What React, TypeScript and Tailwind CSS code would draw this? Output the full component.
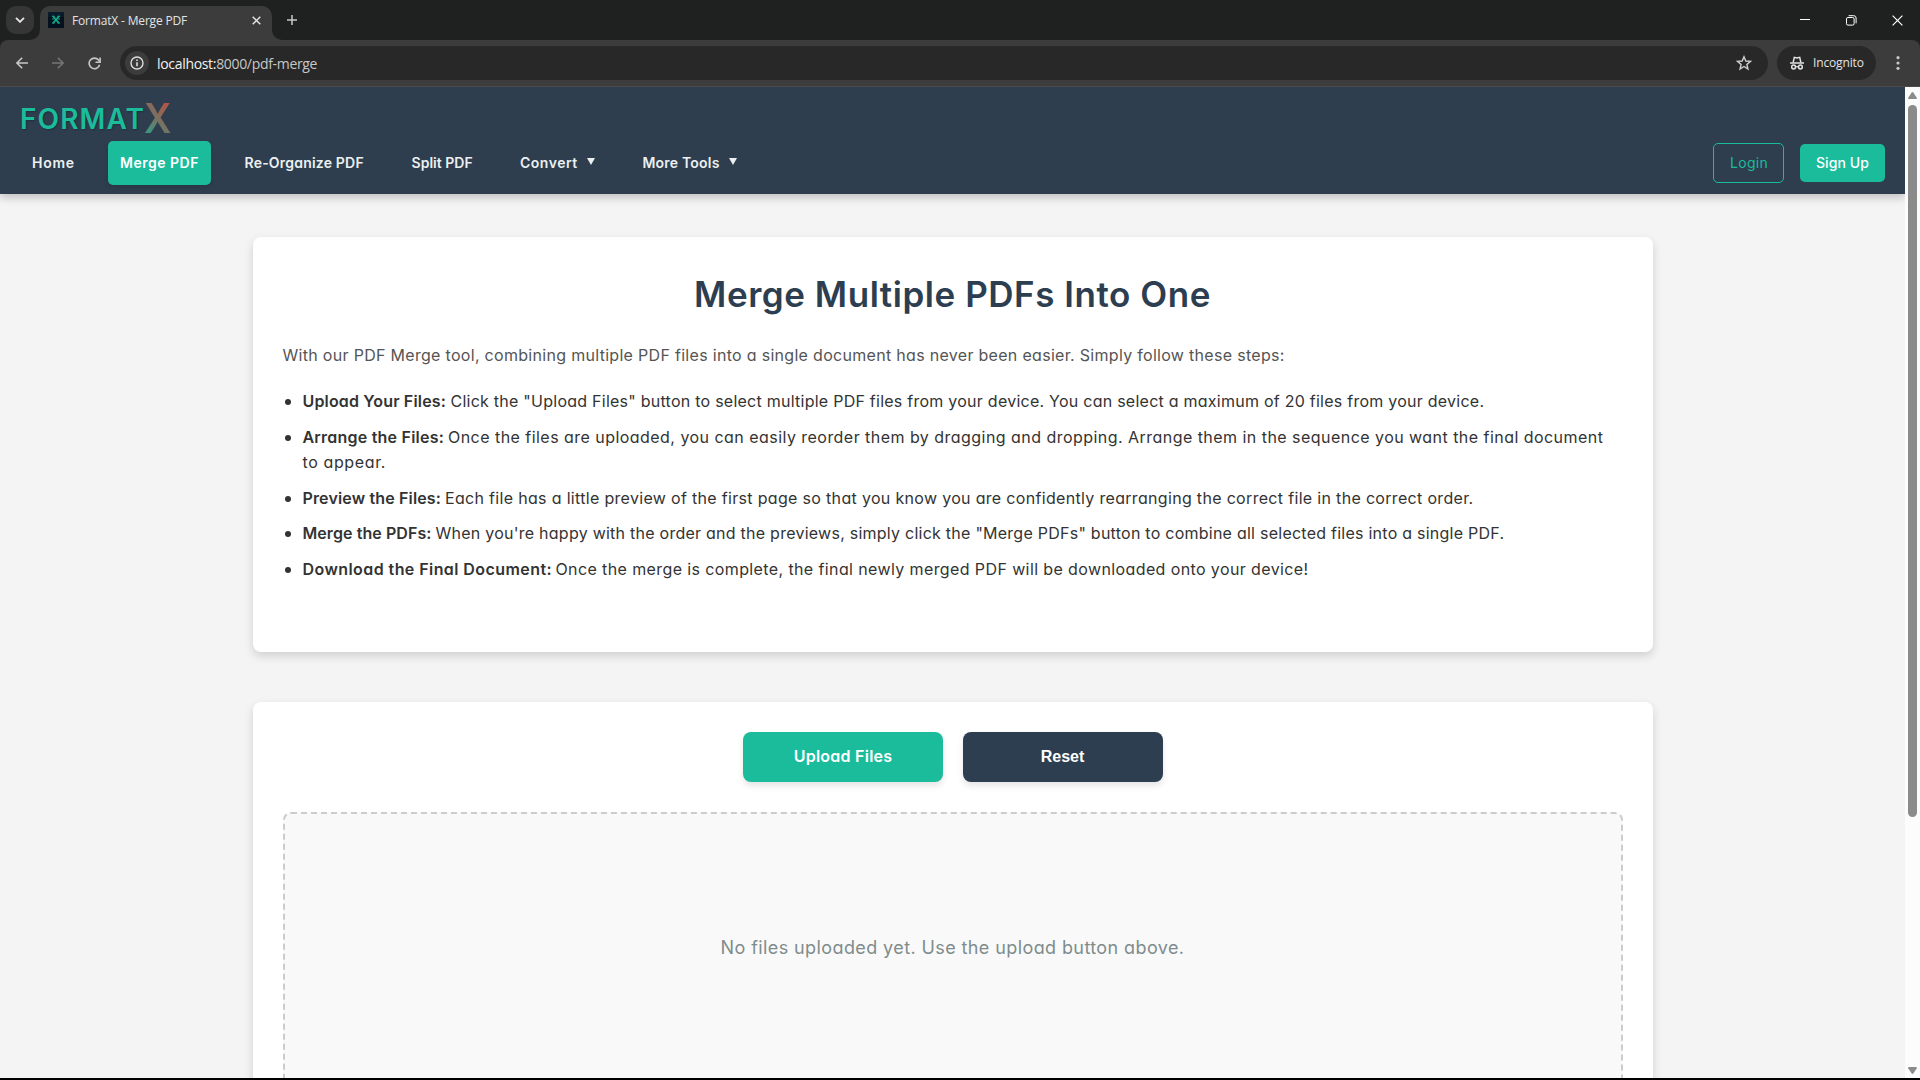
import React from "react";

const CHROME_FONT = "font-['Open_Sans','Noto_Sans',sans-serif]";

function Favicon() {
  return (
    <svg width="16" height="16" viewBox="0 0 16 16" className="shrink-0">
      <rect width="16" height="16" fill="#04111f" />
      <path d="M0 0h16v5H0z" fill="#0a1c2c" />
      <g fill="none" stroke="#12a684" strokeWidth="1.8">
        <path d="M5 4.2 11 11.4M11 4.2 5 11.4" />
        <path d="M4 4.4h2.4M9.6 4.4H12M4 7h2.4M9.6 7H12M4 11h2.4M9.6 11H12" strokeWidth="1.1" />
      </g>
    </svg>
  );
}

function TabStrip() {
  return (
    <div className="flex h-10 shrink-0 bg-[#1f2020] text-[#e3e3e3]">
      <div className="flex items-start pt-1.5 pl-1.5">
        <div className="flex h-7 w-7 items-center justify-center rounded-[10px] bg-[#363636]">
          <svg width="10" height="6" viewBox="0 0 10 6" fill="none" stroke="#e3e3e3" strokeWidth="1.9">
            <path d="M1 0.8 5 4.8 9 0.8" />
          </svg>
        </div>
      </div>
      <svg width="10" height="10" viewBox="0 0 10 10" className="-ml-1 self-end">
        <path d="M10 0v10H0A10 10 0 0 0 10 0z" fill="#3c3c3c" />
      </svg>
      <div className="mt-1.5 flex h-[34px] w-[232px] items-start rounded-t-[10px] bg-[#3c3c3c] pt-1.5 pr-[11.5px] pl-2">
        <Favicon />
        <span className={`mt-px ml-2 text-[12px] leading-4 tracking-[-0.17px] whitespace-nowrap ${CHROME_FONT}`}>
          FormatX - Merge PDF
        </span>
        <svg width="9" height="9" viewBox="0 0 9 9" className="mt-[3.5px] ml-auto" stroke="#e3e3e3" strokeWidth="1.5">
          <path d="M0.7 0.7 8.3 8.3M8.3 0.7 0.7 8.3" />
        </svg>
      </div>
      <svg width="10" height="10" viewBox="0 0 10 10" className="self-end">
        <path d="M0 0v10h10A10 10 0 0 1 0 0z" fill="#3c3c3c" />
      </svg>
      <svg width="10" height="10" viewBox="0 0 10 10" className="mt-[15px] ml-[5px]" stroke="#c7c7c7" strokeWidth="1.5">
        <path d="M5 0v10M0 5h10" />
      </svg>
      <div className="ml-auto flex h-10 items-center pr-[17px]">
        <svg width="10" height="10" viewBox="0 0 10 10" stroke="#fff">
          <path d="M0 4.5h10" />
        </svg>
        <svg width="11" height="11" viewBox="0 0 11 11" className="ml-9" fill="none" stroke="#fff">
          <rect x="0.5" y="2.5" width="7.6" height="7.6" rx="1.4" />
          <path d="M2.6 0.7h5.2a2.3 2.3 0 0 1 2.3 2.3v5.3" />
        </svg>
        <svg width="11" height="11" viewBox="0 0 11 11" className="ml-[35px]" stroke="#fff" strokeWidth="1.2">
          <path d="M0.6 0.6 10.4 10.4M10.4 0.6 0.6 10.4" />
        </svg>
      </div>
    </div>
  );
}

function Toolbar() {
  return (
    <div className="shrink-0 bg-[#1f2020]">
      <div
        className={`flex h-[47px] items-start rounded-t-[8px] border-b border-[#4d4c4b] bg-[#3c3c3c] pt-1.5 ${CHROME_FONT}`}
      >
        <div className="flex h-[34px] w-[120px] items-center pl-4">
          <svg width="12" height="12" viewBox="0 0 12 12" fill="none" stroke="#c7c7c7" strokeWidth="1.6">
            <path d="M12 6H1M6.2 0.7 0.9 6l5.3 5.3" />
          </svg>
          <svg width="12" height="12" viewBox="0 0 12 12" className="ml-6" fill="none" stroke="#757575" strokeWidth="1.6">
            <path d="M0 6h11M5.8 0.7 11.1 6l-5.3 5.3" />
          </svg>
          <svg width="13" height="13" viewBox="0 0 13 13" className="ml-[23.5px]" fill="none" stroke="#c7c7c7" strokeWidth="1.6">
            <path d="M11.6 7.7A5.3 5.3 0 1 1 10.6 3.1L11.8 4.6" />
            <path d="M12.1 0.6v4.6H7.5" />
          </svg>
        </div>
        <div className="flex h-[34px] w-[1648px] items-center rounded-full bg-[#282828] pr-4 pl-[5px]">
          <div className="flex h-6 w-6 items-center justify-center rounded-full bg-[#3c3c3c]">
            <svg width="14" height="14" viewBox="0 0 14 14" fill="none" stroke="#dcdcdc" strokeWidth="1.4">
              <circle cx="7" cy="7" r="6" />
              <path d="M7 6.2v4M7 3.5v1.5" strokeWidth="1.6" />
            </svg>
          </div>
          <span className="ml-2 text-[14px] tracking-[-0.32px] whitespace-nowrap text-[#c7c7c7]">
            <span className="text-[#f1f1f1]">localhost:</span>8000/pdf-merge
          </span>
          <svg width="16" height="16" viewBox="0 0 15 15" className="ml-auto" fill="none" stroke="#d0d0d0" strokeWidth="1.3">
            <path d="M7.5 1.6 9.2 5.6 13.5 6 10.2 8.8 11.2 13.1 7.5 10.8 3.8 13.1 4.8 8.8 1.5 6 5.8 5.6z" />
          </svg>
        </div>
        <div className="ml-[9px] flex h-[34px] w-[99px] items-center rounded-full bg-[#282828] pl-[13px] text-[#e3e3e3]">
          <svg width="14" height="14" viewBox="0 0 14 14" fill="none" stroke="#e3e3e3" strokeWidth="1.5">
            <path d="M0 7h14" />
            <path d="M3.1 6.6 4.3 1.3 7 2 9.7 1.3 10.9 6.6" />
            <circle cx="3.6" cy="11" r="1.9" />
            <circle cx="10.4" cy="11" r="1.9" />
            <path d="M5.4 10.7h3.2" strokeWidth="1.2" />
          </svg>
          <span className="ml-[9px] text-[12px] tracking-[-0.15px]">Incognito</span>
        </div>
        <svg width="4" height="14" viewBox="0 0 4 14" className="mt-2.5 ml-5" fill="#c7c7c7">
          <circle cx="2" cy="1.7" r="1.6" />
          <circle cx="2" cy="7" r="1.6" />
          <circle cx="2" cy="12.3" r="1.6" />
        </svg>
      </div>
    </div>
  );
}

function Triangle() {
  return (
    <svg width="8" height="7" viewBox="0 0 8 7" className="mb-px ml-[9px]" fill="#ecf0f1">
      <path d="M0 0h8L4 7z" />
    </svg>
  );
}

function NavBar() {
  return (
    <header className="relative z-10 h-[107px] shrink-0 bg-[#2e3e4f] shadow-[0_4px_8px_rgba(0,0,0,0.2)]">
      <div className="flex h-[54px] items-end pl-5 leading-none">
        <span className="mb-2 w-[123.5px] text-[28px] font-semibold tracking-[1.1px] whitespace-nowrap text-[#1abc9c] [text-shadow:1px_1px_2px_rgba(0,0,0,0.25)]">
          FORMAT
        </span>
        <span className="mb-[2px] origin-left scale-x-[0.93] bg-[linear-gradient(45deg,#1abc9c_0%,#8b7962_50%,#e74c3c_100%)] bg-clip-text text-[41px] font-semibold text-transparent opacity-85">
          X
        </span>
      </div>
      <div className="flex h-11 items-center pr-5 pl-[19px] text-[14px] font-semibold text-[#ecf0f1]">
        <span className="w-[88.5px] pb-0.5 pl-[13px] tracking-[0.75px]">Home</span>
        <span className="flex h-11 w-[103px] items-center justify-center rounded-[5px] bg-[#1abc9c] pb-0.5 pl-px tracking-[0.5px] whitespace-nowrap text-white shadow-[0_2px_4px_rgba(0,0,0,0.15)]">
          Merge PDF
        </span>
        <span className="w-[201px] pb-0.5 pl-[34px] tracking-[0.2px] whitespace-nowrap">Re-Organize PDF</span>
        <span className="w-[108.5px] pb-0.5 tracking-[0.02px] whitespace-nowrap">Split PDF</span>
        <span className="flex w-[122.5px] items-center pb-0.5 tracking-[0.5px] whitespace-nowrap">
          Convert
          <Triangle />
        </span>
        <span className="flex items-center pb-0.5 tracking-[0.2px] whitespace-nowrap">
          More Tools
          <Triangle />
        </span>
        <span className="ml-auto flex h-10 w-[71px] items-center justify-center rounded-[5px] border border-[#1abc9c] pb-0.5 pl-px font-normal tracking-[0.25px] text-[#1abc9c]">
          Login
        </span>
        <span className="ml-4 flex h-[38px] w-[85px] items-center justify-center rounded-[5px] bg-[#1abc9c] pb-0.5 font-medium tracking-[0.1px] text-white">
          Sign Up
        </span>
      </div>
    </header>
  );
}

interface Step {
  title: string;
  titleClass: string;
  lines: { text: string; className: string }[];
}

const steps: Step[] = [
  {
    title: "Upload Your Files:",
    titleClass: "w-[148px] tracking-[0.16px]",
    lines: [
      {
        text: 'Click the "Upload Files" button to select multiple PDF files from your device. You can select a maximum of 20 files from your device.',
        className: "tracking-[0.249px]",
      },
    ],
  },
  {
    title: "Arrange the Files:",
    titleClass: "w-[145.5px] tracking-[0.22px]",
    lines: [
      {
        text: "Once the files are uploaded, you can easily reorder them by dragging and dropping. Arrange them in the sequence you want the final document",
        className: "tracking-[0.46px]",
      },
      { text: "to appear.", className: "tracking-[0.62px]" },
    ],
  },
  {
    title: "Preview the Files:",
    titleClass: "w-[142.5px] tracking-[0.15px]",
    lines: [
      {
        text: "Each file has a little preview of the first page so that you know you are confidently rearranging the correct file in the correct order.",
        className: "tracking-[0.32px]",
      },
    ],
  },
  {
    title: "Merge the PDFs:",
    titleClass: "w-[133px] tracking-[0.07px]",
    lines: [
      {
        text: 'When you\'re happy with the order and the previews, simply click the "Merge PDFs" button to combine all selected files into a single PDF.',
        className: "tracking-[0.249px]",
      },
    ],
  },
  {
    title: "Download the Final Document:",
    titleClass: "w-[253px] tracking-[0.425px]",
    lines: [
      {
        text: "Once the merge is complete, the final newly merged PDF will be downloaded onto your device!",
        className: "tracking-[0.389px]",
      },
    ],
  },
];

function Instructions() {
  return (
    <section className="mx-auto h-[415px] w-[1400px] rounded-lg bg-white p-[30px] shadow-[0_4px_10px_rgba(0,0,0,0.15)]">
      <h1 className="h-14 text-center text-[35px] leading-[54px] font-semibold tracking-[0.54px] text-[#2c3e50]">
        Merge Multiple PDFs Into One
      </h1>
      <p className="mt-5 leading-[25.6px] tracking-[0.302px] whitespace-nowrap text-[#555]">
        With our PDF Merge tool, combining multiple PDF files into a single document has never been easier. Simply follow
        these steps:
      </p>
      <ul className="mt-[20.4px] flex flex-col gap-2.5 leading-[25.6px] text-[#333]">
        {steps.map((s) => (
          <li key={s.title} className="flex whitespace-nowrap">
            <span className="mt-2.5 mr-3 ml-0.5 h-1.5 w-1.5 shrink-0 rounded-full bg-[#333]" />
            <div>
              {s.lines.map((line, i) => (
                <div key={line.text} className="flex">
                  {i === 0 && <strong className={`font-semibold ${s.titleClass}`}>{s.title}</strong>}
                  <span className={line.className}>{line.text}</span>
                </div>
              ))}
            </div>
          </li>
        ))}
      </ul>
    </section>
  );
}

function UploadPanel() {
  return (
    <section className="mx-auto mt-[50px] w-[1400px] rounded-lg bg-white p-[30px] shadow-[0_4px_10px_rgba(0,0,0,0.15)]">
      <div className="flex justify-center gap-5 font-semibold text-white">
        <button className="h-[50px] w-[200px] rounded-lg bg-[#1abc9c] pb-0.5 pl-px tracking-[0.25px] shadow-[0_4px_6px_rgba(0,0,0,0.1)]">
          Upload Files
        </button>
        <button className="h-[50px] w-[200px] rounded-lg bg-[#2c3e50] font-['Liberation_Sans',sans-serif] font-bold shadow-[0_4px_6px_rgba(0,0,0,0.1)]">
          Reset
        </button>
      </div>
      <div className="mt-[30px] h-[400px] rounded-lg border-2 border-dashed border-[#ccc] bg-[#f9f9f9] pt-[119px] text-center text-[18px] leading-[29px] tracking-[0.4px] text-[#7f8c8d]">
        No files uploaded yet. Use the upload button above.
      </div>
    </section>
  );
}

function ScrollBar() {
  return (
    <div className="flex w-[15px] shrink-0 flex-col items-center bg-[#fcfcfc] pt-[5px] pb-1">
      <svg width="9" height="7" viewBox="0 0 9 7" fill="#8b8b8b">
        <path d="M3.7 0.5Q4.5-0.3 5.3 0.5L8.8 5.8Q9 7 8 7H1Q0 7 0.2 5.8z" />
      </svg>
      <div className="mt-1.5 h-[712px] w-[9px] rounded-full bg-[#8b8b8b]" />
      <svg width="9" height="7" viewBox="0 0 9 7" className="mt-auto" fill="#8b8b8b">
        <path d="M3.7 6.5Q4.5 7.3 5.3 6.5L8.8 1.2Q9 0 8 0H1Q0 0 0.2 1.2z" />
      </svg>
    </div>
  );
}

export default function App() {
  return (
    <div className="flex h-[1080px] w-[1920px] flex-col overflow-hidden border-b-2 border-black bg-[#f4f4f4]">
      <TabStrip />
      <Toolbar />
      <div className="flex min-h-0 flex-1">
        <div className="flex min-w-0 flex-1 flex-col overflow-hidden font-['Inter',sans-serif] [font-feature-settings:'cv11']">
          <NavBar />
          <main className="pt-[43px]">
            <Instructions />
            <UploadPanel />
          </main>
        </div>
        <ScrollBar />
      </div>
    </div>
  );
}
